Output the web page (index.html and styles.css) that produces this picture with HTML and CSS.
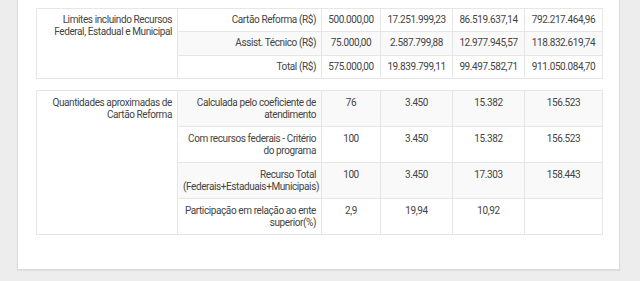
FILE: index.html
```html
<!DOCTYPE html>
<html lang="pt-BR">
<head>
<meta charset="utf-8">
<title>Limites e quantidades</title>
<link rel="stylesheet" href="styles.css">
</head>
<body>
<div class="panel">
  <table class="grid grid-money">
    <colgroup>
      <col class="c1"><col class="c2"><col class="c3"><col class="c4"><col class="c5"><col class="c6">
    </colgroup>
    <tbody>
      <tr>
        <td class="label" rowspan="3">Limites incluindo Recursos Federal, Estadual e Municipal</td>
        <td class="sub">Cartão Reforma (R$)</td>
        <td>500.000,00</td><td>17.251.999,23</td><td>86.519.637,14</td><td>792.217.464,96</td>
      </tr>
      <tr class="shade">
        <td class="sub">Assist. Técnico (R$)</td>
        <td>75.000,00</td><td>2.587.799,88</td><td>12.977.945,57</td><td>118.832.619,74</td>
      </tr>
      <tr>
        <td class="sub">Total (R$)</td>
        <td>575.000,00</td><td>19.839.799,11</td><td>99.497.582,71</td><td>911.050.084,70</td>
      </tr>
    </tbody>
  </table>
  <table class="grid grid-qty">
    <colgroup>
      <col class="c1"><col class="c2"><col class="c3"><col class="c4"><col class="c5"><col class="c6">
    </colgroup>
    <tbody>
      <tr class="shade">
        <td class="label" rowspan="4">Quantidades aproximadas de Cartão Reforma</td>
        <td class="sub">Calculada pelo coeficiente de atendimento</td>
        <td>76</td><td>3.450</td><td>15.382</td><td>156.523</td>
      </tr>
      <tr>
        <td class="sub">Com recursos federais - Critério do programa</td>
        <td>100</td><td>3.450</td><td>15.382</td><td>156.523</td>
      </tr>
      <tr class="shade">
        <td class="sub">Recurso Total (Federais+Estaduais+Municipais)</td>
        <td>100</td><td>3.450</td><td>17.303</td><td>158.443</td>
      </tr>
      <tr>
        <td class="sub">Participação em relação ao ente superior(%)</td>
        <td>2,9</td><td>19,94</td><td>10,92</td><td></td>
      </tr>
    </tbody>
  </table>
</div>
</body>
</html>
```
FILE: styles.css
```css
html, body {
  margin: 0;
  padding: 0;
}
body {
  background: #ededed;
  font-family: Roboto, "Liberation Sans", Arial, sans-serif;
  font-size: 10px;
  letter-spacing: -0.4px;
  color: #444;
  height: 281px;
  overflow: hidden;
}
.panel {
  margin-left: 17px;
  width: 603px;
  box-sizing: border-box;
  background: #fff;
  border: 1px solid #dcdcdc;
  border-top: none;
  box-shadow: 0 1px 1px rgba(0,0,0,0.06);
  padding: 8px 17px 34px 18px;
}
.grid {
  width: 566px;
  border-collapse: collapse;
  table-layout: fixed;
  line-height: 12px;
}
.grid-money {
  margin-bottom: 11px;
}
.grid-money td {
  padding: 5px 5px 5.3px;
}
.c1 { width: 141px; }
.c2 { width: 144px; }
.c3 { width: 59px; }
.c4 { width: 72px; }
.c5 { width: 72px; }
.c6 { width: 78px; }
.grid td {
  border: 1px solid #e6e6e6;
  text-align: center;
  vertical-align: top;
  white-space: normal;
}
.grid-qty td {
  padding: 6px 5px 5px;
}
.grid td.label,
.grid td.sub {
  text-align: right;
}
.grid tr.shade td {
  background: #f9f9f9;
}
.grid tr.shade td.label {
  background: #fff;
}
```
